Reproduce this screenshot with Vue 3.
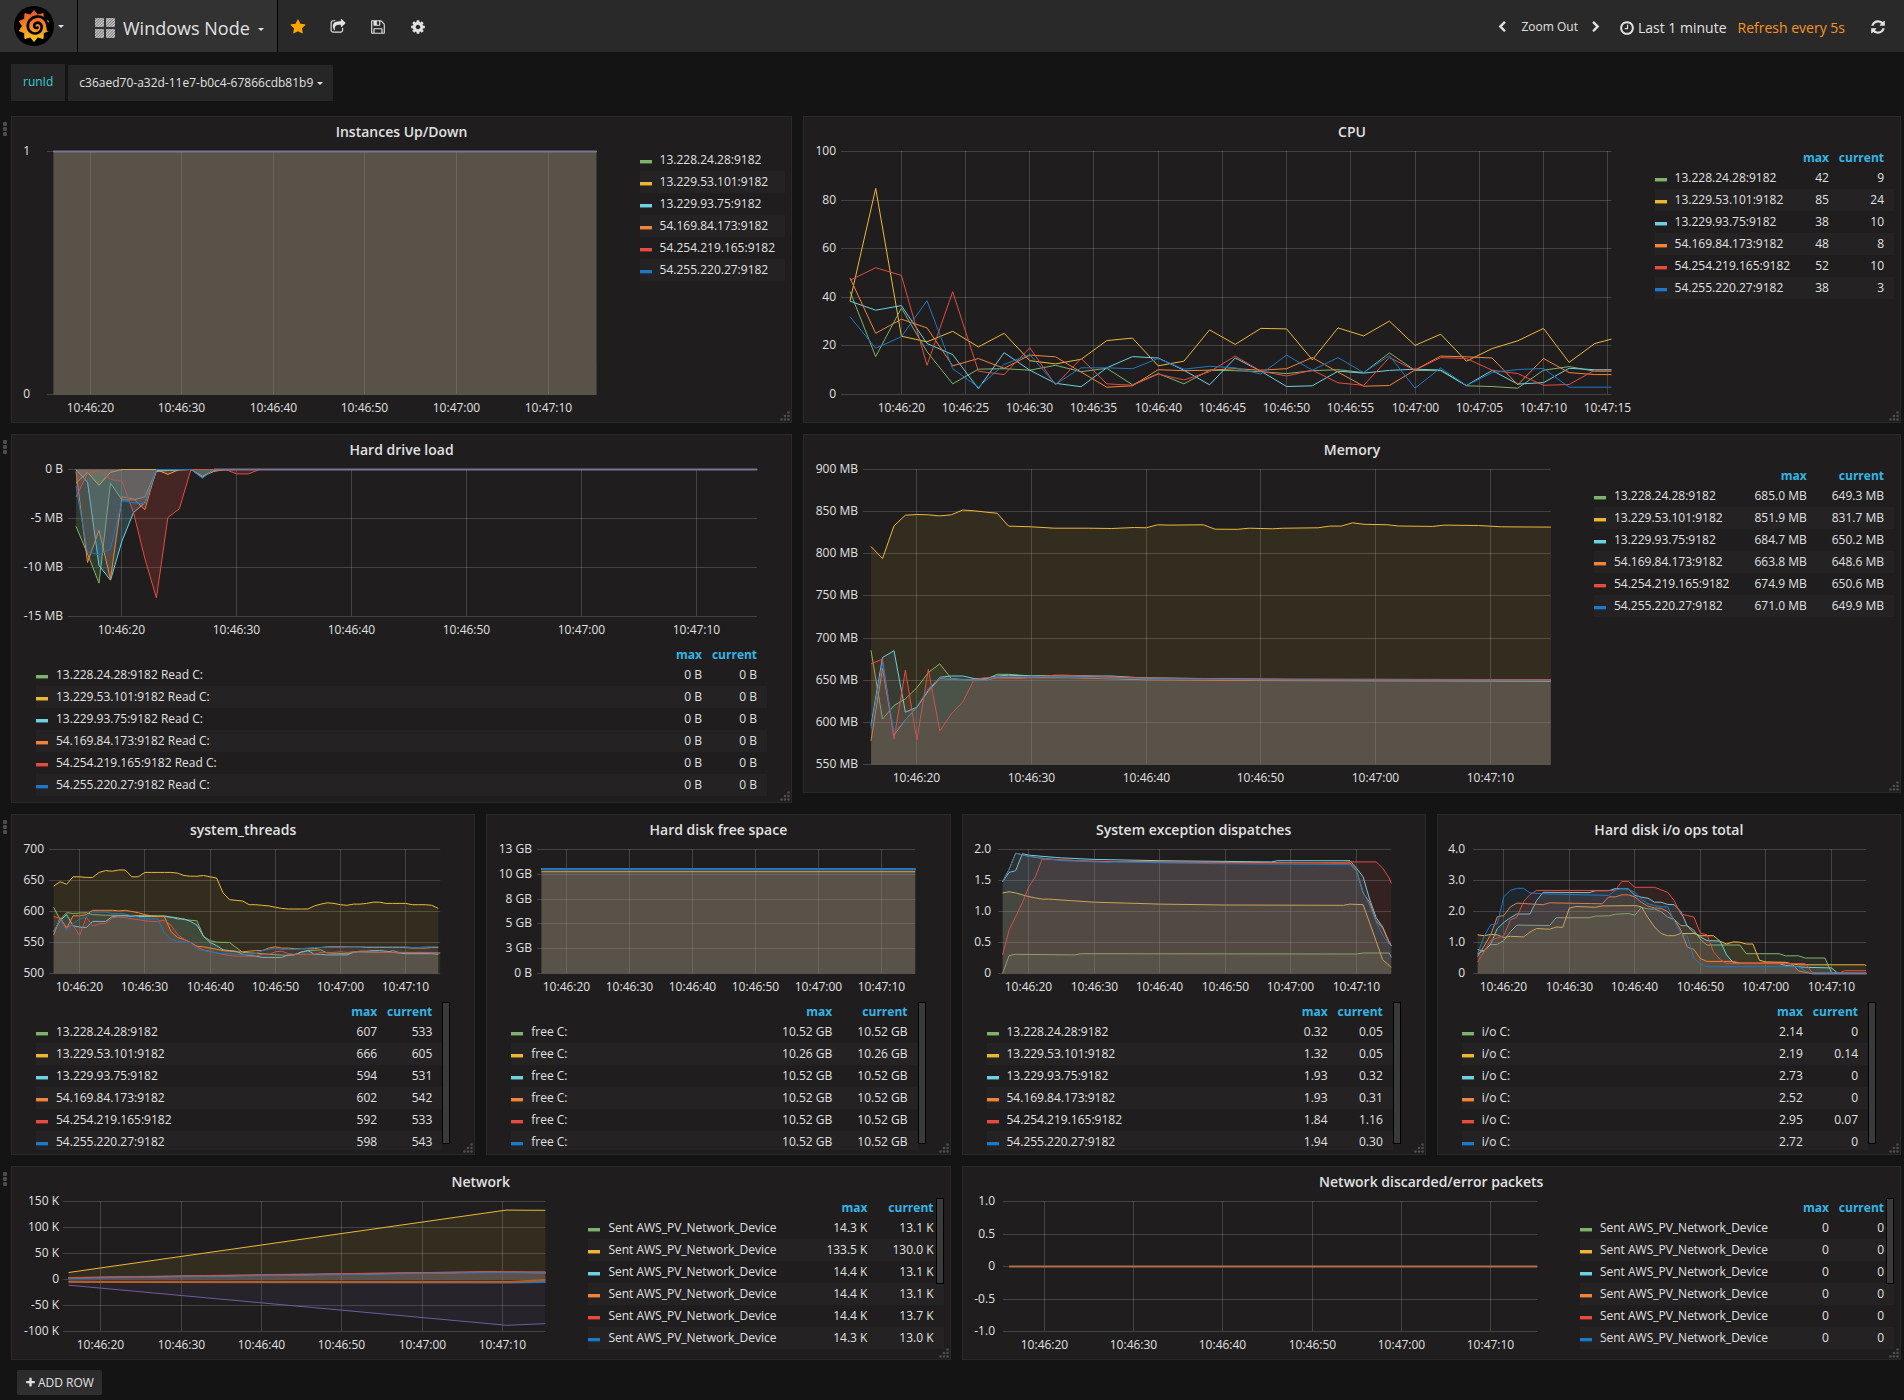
<script setup>
import { ref, reactive, onMounted, onBeforeUnmount } from 'vue'

const GREEN = '#7eb26d'
const YELLOW = '#eab839'
const CYAN = '#6ed0e0'
const ORANGE = '#ef843c'
const RED = '#e24d42'
const BLUE = '#1f78c1'
const PURPLE = '#705da0'
const MAUVE = '#7c7592'
const COLORS = [GREEN, YELLOW, CYAN, ORANGE, RED, BLUE]
const HOSTS = ['13.228.24.28:9182', '13.229.53.101:9182', '13.229.93.75:9182', '54.169.84.173:9182', '54.254.219.165:9182', '54.255.220.27:9182']

// Seconds after 10:46:00. Every chart shows the same one-minute window.
const T0 = 15.3
const T1 = 75.3

// Evenly sampled points, the first at 10:46:16.
const every = (step, values) => values.map((v, i) => [Math.min(16 + i * step, T1), v])
// Points given as t, v, t, v, ...
const at = (...n) => n.reduce((a, v, i) => (i % 2 ? a[a.length - 1].push(v) : a.push([v]), a), [])
const flat = v => [[16, v], [T1, v]]
const line = (color, points, width = 1) => ({ color, points, width })
const rows = (names, ...cols) => names.map((name, i) => ({ name, color: COLORS[i], values: cols.map(c => c[i]) }))
const same = s => COLORS.map(() => s)

const tens = [20, 30, 40, 50, 60, 70]
const fives = [20, 25, 30, 35, 40, 45, 50, 55, 60, 65, 70, 75]

const dashboard = [
  [
    {
      title: 'Instances Up/Down', span: 5, side: true, left: 35, labelRight: 18, h: 243, min: 0, max: 1,
      ticks: [[1, '1'], [0, '0']], times: tens, fill: 0.1,
      series: [...COLORS.map(c => line(c, flat(1))), line(MAUVE, flat(1), 2)],
      legend: rows(HOSTS)
    },
    {
      title: 'CPU', span: 7, side: true, left: 37, labelRight: 32, h: 243, min: 0, max: 100,
      ticks: [100, 80, 60, 40, 20, 0].map(v => [v, String(v)]), times: fives, fill: 0,
      series: [
        line(GREEN, every(2, [42.4, 15.6, 35.6, 17.6, 4.4, 10.4, 10.6, 10, 12, 9.4, 10.8, 4, 8.6, 4.4, 10, 9.8, 9.4, 8.6, 9.8, 10.2, 9, 17.1, 9.9, 9.8, 3.6, 3.3, 2.6, 10, 11.5, 9.6, 9.6])),
        line(YELLOW, every(2, [38.5, 84.8, 24, 21.7, 26, 19.6, 25.2, 13.9, 12.6, 14.5, 22.2, 23.2, 11.8, 13.7, 26.6, 20.6, 27.2, 27, 14.3, 27.4, 24.1, 30.2, 20.2, 24.8, 13.7, 18.9, 22.1, 27.2, 13.2, 21, 22.8])),
        line(CYAN, every(2, [38.4, 34.7, 36.6, 21, 16.4, 2.4, 17.2, 10, 4.6, 3.2, 11, 15.6, 15, 10, 4, 15, 9.6, 3.3, 3.6, 9.6, 8.8, 9.9, 10.4, 10.1, 3.7, 9.9, 4.3, 4.9, 10.8, 10.2, 10.2])),
        line(ORANGE, every(2, [48, 25.2, 31, 27.4, 11.8, 14.8, 10.8, 16.2, 15.5, 9.2, 3, 3.6, 10.2, 9.8, 10, 10.6, 10, 10.6, 15.2, 9.2, 3.4, 3.7, 10.1, 15.8, 15.5, 15, 4, 14.8, 9, 8.2, 8.2])),
        line(RED, every(2, [47, 52.2, 49, 12, 42.3, 9.6, 8.2, 19.2, 4, 14.8, 4.4, 3.8, 8.4, 6, 9.4, 15.8, 9.6, 7.6, 10, 4.8, 3.8, 15.2, 10, 15.2, 14.8, 10, 8.6, 3.8, 4.1, 10, 10])),
        line(BLUE, every(2, [32, 19, 23.8, 38.6, 10.6, 3, 12.4, 16.4, 4.2, 11, 11, 10.6, 14.8, 10.4, 11.6, 11, 8.4, 16.2, 10, 15.2, 9, 16, 2.6, 11, 3.7, 9, 10.3, 10.7, 3, 3, 3]))
      ],
      heads: ['max', 'current'],
      legend: rows(HOSTS, [42, 85, 38, 48, 52, 38], [9, 24, 10, 8, 10, 3])
    }
  ],
  [
    {
      title: 'Hard drive load', span: 5, left: 56, labelRight: 51, h: 147, min: -15, max: 0,
      ticks: [[0, '0 B'], [-5, '-5 MB'], [-10, '-10 MB'], [-15, '-15 MB']], times: tens, fill: 0.2,
      series: [
        line(GREEN, at(16, -5.8, 17, -8.6, 18, -11.6, 19, -1.4, 20, -3.1, 21, -3.1, 22, -2.8, 23, -0.1, 26, 0, 27, -0.7, 28, -0.1, 30, 0, 75.3, 0)),
        line(YELLOW, at(16, -1.4, 17, -0.3, 18, -1.6, 19, -0.3, 20, 0, 23, 0, 24, -0.5, 25, 0, 75.3, 0)),
        line(CYAN, at(16, 0, 17, -1.3, 18, -9.8, 19, -11.3, 20, -7.3, 21, -4.4, 22, -3.4, 23, -0.2, 24, -0.1, 26, 0, 27, -0.8, 28, 0, 75.3, 0)),
        line(ORANGE, at(16, -0.2, 17, -9.5, 18, -6.2, 19, -11.2, 20, -2.8, 21, -3, 22, -4.1, 23, 0, 26, 0, 27, -0.7, 28, -0.2, 29, 0, 75.3, 0)),
        line(RED, at(16, -2.8, 17, -0.4, 18, -0.1, 19, -1, 20, -1.2, 21, -4.4, 22, -9.1, 23, -13.1, 24, -4.9, 25, -4, 26, 0, 29, 0, 30, -0.45, 31, -0.45, 32, 0, 75.3, 0)),
        line(BLUE, at(16, -1.7, 17, -8.4, 18, -8.7, 19, -8.1, 20, -3.2, 21, -3.4, 22, -3.5, 23, 0, 26, 0, 27, -0.9, 28, 0, 75.3, 0)),
        line(MAUVE, at(28, 0, 75.3, 0), 2)
      ],
      heads: ['max', 'current'],
      legend: rows(HOSTS.map(h => h + ' Read C:'), same('0 B'), same('0 B'))
    },
    {
      title: 'Memory', span: 7, side: true, left: 59, labelRight: 54, h: 295, min: 550, max: 900,
      ticks: [900, 850, 800, 750, 700, 650, 600, 550].map(v => [v, v + ' MB']), times: tens, fill: 0.1,
      series: [
        line(GREEN, at(16, 685.5, 17, 604, 18, 620, 19, 628, 20, 641, 21, 659, 22, 669.5, 23, 652, 24, 651, 25, 650.5, 26, 651, 27, 657, 28, 657, 30, 655, 33, 656, 38, 653, 44, 652, 50, 650.5, 60, 650, 75.3, 649.3)),
        line(YELLOW, at(16, 808.6, 17, 794.4, 18, 833.2, 19, 845.8, 20, 846.6, 21, 846.2, 22, 845, 23, 846.2, 24, 852, 25, 851, 26, 849.4, 27, 848.2, 28, 832.8, 30, 832, 32, 830.4, 35, 830.4, 37, 830, 39, 831.2, 40, 830.8, 41, 834.4, 42, 834, 45, 834.4, 46, 829.2, 48, 829, 49, 830.4, 51, 829.6, 52, 830.4, 55, 830.8, 56, 832.8, 57, 832.8, 58, 836.8, 59, 835, 61, 834.5, 62, 833, 65, 832.5, 66, 834, 69, 833.5, 71, 832, 75.3, 831.7)),
        line(CYAN, at(16, 596, 17, 677, 18, 685, 19, 612, 20, 618, 21, 638, 22, 653.5, 23, 655, 24, 655, 25, 652, 26, 652, 27, 655, 28, 656, 30, 655, 37, 655, 40, 652.5, 45, 652, 55, 650.5, 75.3, 650.2)),
        line(ORANGE, at(16, 578, 17, 663.8, 18, 585, 19, 603, 20, 618, 21, 637, 22, 652, 24, 650.5, 26, 650, 27, 653, 33, 653, 40, 650.5, 50, 649.5, 75.3, 648.6)),
        line(RED, at(16, 669.5, 17, 675, 18, 580, 19, 662, 20, 579, 21, 663, 22, 590, 23, 610, 24, 624, 25, 651, 26, 653, 29, 652, 32, 656, 36, 654.5, 40, 652.5, 50, 651.5, 75.3, 650.6)),
        line(BLUE, at(16, 593, 17, 671, 18, 588, 19, 603, 20, 619, 21, 640, 22, 653, 24, 650.5, 26, 650, 27, 654.5, 32, 654, 40, 651.5, 50, 650.5, 75.3, 649.9))
      ],
      heads: ['max', 'current'],
      legend: rows(HOSTS, ['685.0 MB', '851.9 MB', '684.7 MB', '663.8 MB', '674.9 MB', '671.0 MB'], ['649.3 MB', '831.7 MB', '650.2 MB', '648.6 MB', '650.6 MB', '649.9 MB'])
    }
  ],
  [
    {
      title: 'system_threads', span: 3, scroll: true, left: 37, labelRight: 32, h: 124, min: 500, max: 700,
      ticks: [700, 650, 600, 550, 500].map(v => [v, String(v)]), times: tens, fill: 0.1,
      series: [
        line(GREEN, at(16, 607, 17, 587, 18, 598, 19, 597, 21, 598, 22, 595, 24, 594, 33, 593, 34, 591, 35, 590, 36, 587, 38, 585, 39, 560, 40, 553, 41, 550.5, 43, 550, 44, 542, 45, 534, 48, 532, 52, 529, 53, 531, 54, 534, 55, 537, 57, 538, 58, 533, 61, 532, 62, 535, 67, 534, 68, 537, 69, 534, 75.3, 533)),
        line(YELLOW, every(1, [641, 648, 644, 656, 656, 655, 655, 663, 666, 665, 667, 667, 656, 656, 663, 663, 663, 663, 663, 662, 658, 657, 657, 658, 656, 654, 630, 619, 618, 617, 611, 611, 610, 609, 607, 605, 604, 604, 604, 604, 609, 612, 614, 613, 611, 610, 612, 612, 613, 615, 615, 613, 613, 613, 613, 611, 611, 611, 610, 605])),
        line(CYAN, every(1, [568, 585, 595, 577, 575, 574, 584, 584, 584, 592, 593, 593, 592, 592, 592, 592, 592, 592, 591, 588, 588, 584, 578, 560, 550, 545, 538, 537, 536, 531, 529, 528, 526, 526, 526, 526, 530, 530, 535, 537, 531, 531, 530, 530, 530, 530, 534, 536, 536, 537, 537, 536, 534, 533, 532, 532, 532, 532, 532, 531])),
        line(ORANGE, every(1, [562, 590, 573, 593, 593, 595, 602, 602, 602, 602, 601, 602, 600, 598, 595, 593, 592, 592, 568, 558, 555, 550, 544, 543, 541, 539, 537, 536, 535, 535, 536, 537, 537, 541, 543, 541, 541, 540, 540, 540, 540, 542, 543, 543, 543, 543, 543, 543, 542, 542, 542, 542, 542, 542, 542, 541, 541, 541, 542, 542])),
        line(RED, every(1, [592, 589, 575, 578, 561, 591, 577, 580, 581, 590, 591, 590, 588, 587, 585, 584, 584, 586, 578, 563, 555, 550, 543, 538, 536, 533, 531, 529, 528, 528, 528, 528, 531, 531, 535, 536, 532, 531, 531, 531, 531, 534, 534, 534, 535, 534, 535, 535, 535, 535, 534, 534, 534, 534, 534, 534, 534, 534, 533, 533])),
        line(BLUE, every(1, [568, 587, 570, 580, 588, 591, 599, 599, 599, 597, 597, 596, 593, 591, 588, 588, 588, 565, 556, 552, 551, 550, 539, 537, 535, 533, 532, 532, 531, 531, 531, 532, 537, 539, 540, 539, 539, 539, 540, 541, 542, 542, 542, 542, 542, 543, 543, 543, 543, 543, 543, 543, 543, 543, 543, 542, 542, 543, 543, 543]))
      ],
      heads: ['max', 'current'],
      legend: rows(HOSTS, [607, 666, 594, 602, 592, 598], [533, 605, 531, 542, 533, 543])
    },
    {
      title: 'Hard disk free space', span: 3, scroll: true, left: 50, labelRight: 45, h: 124, min: 0, max: 12.5,
      ticks: [[12.5, '13 GB'], [10, '10 GB'], [7.5, '8 GB'], [5, '5 GB'], [2.5, '3 GB'], [0, '0 B']], times: tens, fill: 0.1,
      series: COLORS.map((c, i) => line(c, flat(i === 1 ? 10.26 : 10.52), c === BLUE ? 2 : 1)),
      heads: ['max', 'current'],
      legend: rows(same('free C:'), COLORS.map((c, i) => (i === 1 ? '10.26 GB' : '10.52 GB')), COLORS.map((c, i) => (i === 1 ? '10.26 GB' : '10.52 GB')))
    },
    {
      title: 'System exception dispatches', span: 3, scroll: true, left: 35, labelRight: 28, h: 124, min: 0, max: 2,
      ticks: [[2, '2.0'], [1.5, '1.5'], [1, '1.0'], [0.5, '0.5'], [0, '0']], times: tens, fill: 0.1,
      series: [
        line(GREEN, at(16, 0, 17, 0.29, 18, 0.31, 27, 0.3, 28, 0.32, 70, 0.315, 71, 0.33, 75, 0.33, 75.3, 0.26)),
        line(YELLOW, at(16, 1.3, 17, 1.32, 18, 1.3, 19, 1.27, 20, 1.24, 21, 1.22, 22, 1.2, 23, 1.2, 30, 1.15, 35, 1.135, 40, 1.12, 50, 1.105, 68, 1.1, 69, 1.12, 71, 1.11, 72, 0.82, 73, 0.52, 74, 0.22, 75.3, 0.1)),
        line(CYAN, at(16, 1.48, 17, 1.63, 18, 1.66, 19, 1.93, 20, 1.91, 22, 1.89, 25, 1.865, 30, 1.84, 40, 1.82, 57, 1.8, 58, 1.82, 69, 1.82, 70, 1.7, 71, 1.56, 72, 1.2, 73, 0.9, 74, 0.75, 75, 0.5, 75.3, 0.45)),
        line(ORANGE, at(16, 1.48, 17, 1.68, 18, 1.94, 20, 1.89, 22, 1.86, 25, 1.83, 30, 1.81, 40, 1.8, 69, 1.78, 70, 1.66, 71, 1.3, 72, 1.15, 73, 0.85, 74, 0.73, 75, 0.5, 75.3, 0.45)),
        line(RED, at(16, 0.3, 17, 0.7, 18, 0.92, 19, 1.14, 20, 1.4, 21, 1.56, 22, 1.84, 23, 1.84, 30, 1.81, 40, 1.79, 55, 1.78, 68, 1.79, 69, 1.8, 73, 1.8, 74, 1.7, 75, 1.54, 75.3, 1.45)),
        line(BLUE, at(16, 1.48, 17, 1.68, 18, 1.94, 19, 1.91, 20, 1.89, 22, 1.86, 25, 1.82, 30, 1.8, 32, 1.79, 33, 1.8, 40, 1.785, 50, 1.77, 69, 1.755, 70, 1.65, 71, 1.32, 72, 1.1, 73, 0.83, 74, 0.62, 75, 0.47, 75.3, 0.45))
      ],
      heads: ['max', 'current'],
      legend: rows(HOSTS, ['0.32', '1.32', '1.93', '1.93', '1.84', '1.94'], ['0.05', '0.05', '0.32', '0.31', '1.16', '0.30'])
    },
    {
      title: 'Hard disk i/o ops total', span: 3, scroll: true, left: 35, labelRight: 27, h: 124, min: 0, max: 4,
      ticks: [[4, '4.0'], [3, '3.0'], [2, '2.0'], [1, '1.0'], [0, '0']], times: tens, fill: 0.1,
      series: [
        line(GREEN, at(16, 0.63, 17, 0.75, 18, 0.93, 19, 0.94, 20, 1.06, 21, 1.35, 22, 1.56, 27, 1.55, 28, 1.8, 33, 1.8, 34, 1.85, 36, 1.86, 37, 1.91, 39, 1.94, 40, 1.88, 41, 2.14, 42, 2.08, 43, 2.08, 44, 2, 45, 1.82, 46, 1.75, 47, 1.55, 48, 1.54, 49, 1.4, 50, 1.1, 51, 0.92, 56, 0.92, 57, 0.64, 62, 0.64, 63, 0.57, 65, 0.57, 66, 0.5, 69, 0.5, 70, 0.02, 75.3, 0)),
        line(YELLOW, at(16, 1.25, 17, 1.22, 18, 1.26, 19, 1.25, 20, 1.16, 21, 1.2, 23, 1.18, 24, 1.34, 25, 1.45, 27, 1.43, 28, 1.5, 29, 1.49, 30, 2.11, 31, 2.16, 34, 2.14, 35, 2.18, 40, 2.19, 41, 2.15, 42, 1.8, 43, 1.5, 44, 1.29, 45, 1.22, 46, 1.22, 47, 1.29, 49, 1.29, 50, 1.22, 52, 1.22, 53, 1.04, 54, 0.95, 55, 1.02, 56, 1.01, 57, 0.95, 58, 0.95, 59, 0.43, 60, 0.37, 63, 0.36, 64, 0.31, 65, 0.28, 75, 0.28, 75.3, 0.26)),
        line(CYAN, at(16, 0.77, 17, 0.72, 18, 0.95, 19, 1.45, 20, 1.65, 21, 1.8, 22, 1.92, 24, 1.92, 25, 2.35, 26, 2.62, 33, 2.61, 34, 2.67, 36, 2.67, 37, 2.74, 39, 2.73, 40, 2.52, 41, 2.46, 42, 2.43, 43, 2.3, 44, 2.3, 45, 2.23, 46, 2.22, 47, 2, 48, 1.53, 49, 1.32, 50, 1.18, 51, 1.06, 53, 1.05, 54, 0.6, 55, 0.35, 56, 0.33, 62, 0.32, 63, 0.26, 66, 0.2, 70, 0.18, 71, 0, 75.3, 0)),
        line(ORANGE, at(16, 0.55, 17, 0.88, 18, 1.25, 19, 1.83, 20, 1.87, 21, 2.15, 22, 2.27, 26, 2.22, 27, 2.28, 35, 2.25, 36, 2.47, 37, 2.47, 38, 2.54, 39, 2.54, 40, 2.47, 41, 2.3, 42, 2.17, 43, 2.12, 44, 2.1, 45, 2, 46, 1.75, 47, 1.4, 48, 0.85, 49, 0.78, 50, 0.48, 51, 0.39, 55, 0.39, 56, 0.34, 63, 0.34, 64, 0.3, 65, 0.08, 67, 0, 75.3, 0)),
        line(RED, at(16, 0.37, 17, 0.7, 18, 1.07, 19, 1.15, 20, 1.22, 21, 1.73, 22, 1.82, 23, 2.32, 24, 2.55, 25, 2.68, 37, 2.68, 38, 2.97, 39, 2.97, 40, 2.78, 43, 2.78, 44, 2.7, 45, 2.62, 46, 2.35, 47, 1.92, 48, 1.87, 49, 1.82, 50, 1.3, 51, 1.25, 52, 0.7, 53, 0.45, 54, 0.33, 66, 0.32, 67, 0.04, 68, 0, 71, 0, 72, 0.09, 75.3, 0.09)),
        line(BLUE, at(16, 0.63, 17, 1.2, 18, 1.57, 19, 1.6, 20, 2.48, 21, 2.68, 22, 2.75, 23, 2.75, 24, 2.6, 26, 2.57, 36, 2.52, 37, 2.68, 38, 2.75, 39, 2.72, 40, 2.62, 41, 2.4, 42, 2.25, 43, 2.2, 44, 2.15, 45, 2.15, 46, 1.7, 47, 1.3, 48, 1.2, 49, 0.5, 50, 0.3, 51, 0.22, 65, 0.22, 66, 0.08, 67, 0.02, 75.3, 0.02)),
        line(MAUVE, at(67, 0, 75.3, 0), 2)
      ],
      heads: ['max', 'current'],
      legend: rows(same('i/o C:'), ['2.14', '2.19', '2.73', '2.52', '2.95', '2.72'], ['0', '0.14', '0', '0', '0.07', '0'])
    }
  ],
  [
    {
      title: 'Network', span: 6, side: true, scroll: true, wide: true, left: 51, labelRight: 47, h: 130, min: -100, max: 150,
      ticks: [[150, '150 K'], [100, '100 K'], [50, '50 K'], [0, '0'], [-50, '-50 K'], [-100, '-100 K']], times: tens, fill: 0.1,
      series: [
        line(GREEN, at(16, 3, 68, 14, 75.3, 13)),
        line(YELLOW, at(16, 13.5, 70.4, 133.5, 75.3, 133)),
        line(CYAN, at(16, 3, 68, 14, 75.3, 13)),
        line(ORANGE, at(16, 3, 68, 14, 75.3, 13)),
        line(BLUE, at(16, 3, 68, 14, 75.3, 13.5), 2),
        line(RED, at(16, 3.5, 68, 15, 75.3, 14.5)),
        line(PURPLE, at(16, -11, 70.5, -88, 75.3, -85)),
        line('#ba43a9', at(16, -4, 75.3, -4)),
        line(BLUE, at(16, -4, 20, -5, 71, -6, 75.3, -5), 2),
        line('#c15c17', at(16, -5, 71, -5, 75.3, -1), 2)
      ],
      heads: ['max', 'current'],
      legend: rows(same('Sent AWS_PV_Network_Device'), ['14.3 K', '133.5 K', '14.4 K', '14.4 K', '14.4 K', '14.3 K'], ['13.1 K', '130.0 K', '13.1 K', '13.1 K', '13.7 K', '13.0 K'])
    },
    {
      title: 'Network discarded/error packets', span: 6, side: true, scroll: true, wide: true, left: 40, labelRight: 32, h: 130, min: -1, max: 1,
      ticks: [[1, '1.0'], [0.5, '0.5'], [0, '0'], [-0.5, '-0.5'], [-1, '-1.0']], times: tens, fill: 0,
      series: [line('#b0704a', flat(0), 2)],
      heads: ['max', 'current'],
      legend: rows(same('Sent AWS_PV_Network_Device'), same('0'), same('0'))
    }
  ]
]

const TOP = 10
const widths = reactive({})
const page = ref(null)
let observer

const plotWidth = (p, key) => Math.max((widths[key] || 400) - p.left - (p.side ? 43 : 34), 10)
const px = (p, key, t) => p.left + ((t - T0) / (T1 - T0)) * plotWidth(p, key)
const py = (p, v) => TOP + 0.5 + ((p.max - v) / (p.max - p.min)) * p.h
const crisp = n => Math.round(n - 0.5) + 0.5
const strokePath = (p, key, s) => 'M' + s.points.map(([t, v]) => px(p, key, t).toFixed(1) + ' ' + py(p, v).toFixed(1)).join('L')
const areaPath = (p, key, s) => {
  const base = py(p, Math.min(Math.max(0, p.min), p.max))
  const first = px(p, key, s.points[0][0])
  const last = px(p, key, s.points[s.points.length - 1][0])
  return `${strokePath(p, key, s)}L${last} ${base}L${first} ${base}Z`
}
const clock = t => `10:${t < 60 ? 46 : 47}:${String(t % 60).padStart(2, '0')}`

onMounted(() => {
  const charts = page.value.querySelectorAll('svg.chart')
  const measure = el => { widths[el.dataset.key] = el.getBoundingClientRect().width }
  charts.forEach(measure)
  observer = new ResizeObserver(list => list.forEach(e => measure(e.target)))
  charts.forEach(el => observer.observe(el))
})
onBeforeUnmount(() => observer.disconnect())

const icons = {
  star: 'M1728 647q0 22-26 48l-363 354 86 500q1 7 1 20 0 21-10.5 35.5t-30.5 14.5q-19 0-40-12l-449-236-449 236q-22 12-40 12-21 0-31.5-14.5t-10.5-35.5q0-6 2-20l86-500-364-354q-25-27-25-48 0-37 56-46l502-73 225-455q19-41 49-41t49 41l225 455 502 73q56 9 56 46z',
  share: 'M1472 989v259q0 119-84.5 203.5t-203.5 84.5h-832q-119 0-203.5-84.5t-84.5-203.5v-832q0-119 84.5-203.5t203.5-84.5h255q13 0 22.5 9.5t9.5 22.5q0 27-26 32-77 26-133 60-10 4-16 4h-112q-66 0-113 47t-47 113v832q0 66 47 113t113 47h832q66 0 113-47t47-113v-214q0-19 18-29 28-13 54-37 16-16 35-8 21 9 21 29zm237-496l-384 384q-18 19-45 19-12 0-25-5-39-17-39-59v-192h-160q-323 0-438 131-119 137-74 473 3 23-20 34-8 2-12 2-16 0-26-13-10-14-21-31t-39.5-68.5-49.5-99.5-38.5-114-17.5-122q0-49 3.5-91t14-90 28-88 47-81.5 68.5-74 94.5-61.5 124.5-48.5 159.5-30.5 196.5-11h160v-192q0-42 39-59 13-5 25-5 26 0 45 19l384 384q19 19 19 45t-19 45z',
  save: 'M512 1536h768v-384h-768v384zm896 0h128v-896q0-14-10-38.5t-20-34.5l-281-281q-10-10-34-20t-39-10v416q0 40-28 68t-68 28h-576q-40 0-68-28t-28-68v-416h-128v1280h128v-416q0-40 28-68t68-28h832q40 0 68 28t28 68v416zm-384-928v-320q0-13-9.5-22.5t-22.5-9.5h-192q-13 0-22.5 9.5t-9.5 22.5v320q0 13 9.5 22.5t22.5 9.5h192q13 0 22.5-9.5t9.5-22.5zm640 32v928q0 40-28 68t-68 28h-1344q-40 0-68-28t-28-68v-1344q0-40 28-68t68-28h928q40 0 88 20t76 48l280 280q28 28 48 76t20 88z',
  cog: 'M1152 896q0-106-75-181t-181-75-181 75-75 181 75 181 181 75 181-75 75-181zm512-109v222q0 12-8 23t-20 13l-185 28q-19 54-39 91 35 50 107 138 10 12 10 25t-9 23q-27 37-99 108t-94 71q-12 0-26-9l-138-108q-44 23-91 38-16 136-29 186-7 28-36 28h-222q-14 0-24.5-8.5t-11.5-21.5l-28-184q-49-16-90-37l-141 107q-10 9-25 9-14 0-25-11-126-114-165-168-7-10-7-23 0-12 8-23 15-21 51-66.5t54-70.5q-27-50-41-99l-183-27q-13-2-21-12.5t-8-23.5v-222q0-12 8-23t19-13l186-28q14-46 39-92-40-57-107-138-10-12-10-24 0-10 9-23 26-36 98.5-107.5t94.5-71.5q13 0 26 10l138 107q44-23 91-38 16-136 29-186 7-28 36-28h222q14 0 24.5 8.5t11.5 21.5l28 184q49 16 90 37l142-107q9-9 24-9 13 0 25 10 129 119 165 170 7 8 7 22 0 12-8 23-15 21-51 66.5t-54 70.5q26 50 41 98l183 28q13 2 21 12.5t8 23.5z',
  refresh: 'M1639 1056q0 5-1 7-64 268-268 434.5t-478 166.5q-146 0-282.5-55t-243.5-157l-129 129q-19 19-45 19t-45-19-19-45v-448q0-26 19-45t45-19h448q26 0 45 19t19 45-19 45l-137 137q71 66 161 102t187 36q134 0 250-65t186-179q11-17 53-117 8-23 30-23h192q13 0 22.5 9.5t9.5 22.5zm25-800v448q0 26-19 45t-45 19h-448q-26 0-45-19t-19-45 19-45l138-138q-148-137-349-137-134 0-250 65t-186 179q-11 17-53 117-8 23-30 23h-199q-13 0-22.5-9.5t-9.5-22.5v-7q65-268 270-434.5t480-166.5q146 0 284 55.5t245 156.5l130-129q19-19 45-19t45 19 19 45z',
  clock: 'M1024 544v448q0 14-9 23t-23 9h-320q-14 0-23-9t-9-23v-64q0-14 9-23t23-9h224v-352q0-14 9-23t23-9h64q14 0 23 9t9 23zm416 352q0-148-73-273t-198-198-273-73-273 73-198 198-73 273 73 273 198 198 273 73 273-73 198-198 73-273zm224 0q0 209-103 385.5t-279.5 279.5-385.5 103-385.5-103-279.5-279.5-103-385.5 103-385.5 279.5-279.5 385.5-103 385.5 103 279.5 279.5 103 385.5z',
  left: 'M1427 301l-531 531 531 531q19 19 19 45t-19 45l-166 166q-19 19-45 19t-45-19l-742-742q-19-19-19-45t19-45l742-742q19-19 45-19t45 19l166 166q19 19 19 45t-19 45z',
  right: 'M1363 877l-742 742q-19 19-45 19t-45-19l-166-166q-19-19-19-45t19-45l531-531-531-531q-19-19-19-45t19-45l166-166q19-19 45-19t45 19l742 742q19 19 19 45t-19 45z',
  plus: 'M1600 736v192q0 40-28 68t-68 28h-416v416q0 40-28 68t-68 28h-192q-40 0-68-28t-28-68v-416h-416q-40 0-68-28t-28-68v-192q0-40 28-68t68-28h416v-416q0-40 28-68t68-28h192q40 0 68 28t28 68v416h416q40 0 68 28t28 68z'
}
const actions = [
  { name: 'star', label: 'Mark as favorite' },
  { name: 'share', label: 'Share dashboard' },
  { name: 'save', label: 'Save dashboard' },
  { name: 'cog', label: 'Dashboard settings' }
]

// Rounded rays of the brand flower, alternating between two radii.
const rays = Array.from({ length: 20 }, (_, i) => {
  const a = (i * Math.PI) / 10 - Math.PI / 2
  const r = i % 2 ? 11.5 : 15.5
  return (20 + r * Math.cos(a)).toFixed(1) + ',' + (20 + r * Math.sin(a)).toFixed(1)
}).join(' ')
</script>

<template>
  <div ref="page" class="page">
    <header class="navbar">
      <button class="brand" type="button" aria-label="Main menu">
        <svg class="logo" viewBox="0 0 40 40" aria-hidden="true">
          <defs>
            <linearGradient id="flame" x1="0" y1="0" x2="0" y2="1">
              <stop offset="0" stop-color="#f0512a" />
              <stop offset="0.45" stop-color="#f4802a" />
              <stop offset="1" stop-color="#fccb16" />
            </linearGradient>
          </defs>
          <circle cx="20" cy="20" r="20" fill="#000" />
          <polygon :points="rays" fill="url(#flame)" stroke="url(#flame)" stroke-width="1" stroke-linejoin="round" />
          <path d="M34 24C34 14 28.500 9.800 22.500 10.600C16 11.500 12.800 17 14 22C15.200 26.800 20.500 28.800 24.500 26.600C28 24.600 28.800 19.800 26 17.600C23.500 15.600 20 17.200 20.200 20C20.400 21.800 22.200 22.600 23.600 21.600" fill="none" stroke="#000" stroke-width="2.600" stroke-linecap="round" />
        </svg>
        <i class="caret"></i>
      </button>
      <button class="picker" type="button">
        <svg class="tiles" viewBox="0 0 20 20" aria-hidden="true">
          <defs>
            <pattern id="hatch" width="2" height="2" patternUnits="userSpaceOnUse" patternTransform="rotate(45)">
              <rect width="2" height="2" fill="#7c7c7c" />
              <rect width="1" height="2" fill="#d0d0d0" />
            </pattern>
          </defs>
          <rect v-for="n in 4" :key="n" :x="n % 2 ? 0 : 11" :y="n > 2 ? 11 : 0" width="9" height="9" rx="1" fill="url(#hatch)" />
        </svg>
        <span>Windows Node</span>
        <i class="caret"></i>
      </button>
      <nav class="actions">
        <button v-for="a in actions" :key="a.name" type="button" :class="['action', a.name]" :aria-label="a.label">
          <svg class="icon" viewBox="0 0 1792 1792" aria-hidden="true"><path :d="icons[a.name]" /></svg>
        </button>
      </nav>
      <div class="time">
        <button type="button" class="shift" aria-label="Shift time backward"><svg class="chevron" viewBox="0 0 1792 1792" aria-hidden="true"><path :d="icons.left" /></svg></button>
        <button type="button" class="zoom">Zoom Out</button>
        <button type="button" class="shift" aria-label="Shift time forward"><svg class="chevron" viewBox="0 0 1792 1792" aria-hidden="true"><path :d="icons.right" /></svg></button>
        <button type="button" class="range">
          <svg class="icon" viewBox="0 0 1792 1792" aria-hidden="true"><path :d="icons.clock" /></svg>
          <span>Last 1 minute</span>
          <span class="every">Refresh every 5s</span>
        </button>
        <button type="button" class="reload" aria-label="Refresh"><svg class="icon" viewBox="0 0 1792 1792" aria-hidden="true"><path :d="icons.refresh" /></svg></button>
      </div>
    </header>

    <div class="submenu">
      <label class="var-name" for="run-id">runId</label>
      <button id="run-id" class="var-value" type="button">c36aed70-a32d-11e7-b0c4-67866cdb81b9<i class="caret"></i></button>
    </div>

    <main>
      <section v-for="(row, r) in dashboard" :key="r" class="row">
        <div class="handle"><i></i><i></i><i></i></div>
        <div class="panels">
          <article v-for="(p, c) in row" :key="p.title" :class="['panel', 'span-' + p.span]">
            <h2>{{ p.title }}</h2>
            <div :class="['body', { side: p.side }]">
              <svg class="chart" :data-key="r + '-' + c" :height="TOP + p.h + 26" role="img" :aria-label="p.title">
                <g class="grid">
                  <line v-for="t in p.ticks" :key="t[1]" :x1="p.left" :x2="px(p, r + '-' + c, T1)" :y1="crisp(py(p, t[0]))" :y2="crisp(py(p, t[0]))" />
                  <line v-for="t in p.times" :key="t" :x1="crisp(px(p, r + '-' + c, t))" :x2="crisp(px(p, r + '-' + c, t))" :y1="TOP" :y2="TOP + p.h" />
                </g>
                <g v-for="(s, i) in p.series" :key="i">
                  <path v-if="p.fill && s.color !== MAUVE" :d="areaPath(p, r + '-' + c, s)" :fill="s.color" :fill-opacity="p.fill" />
                  <path :d="strokePath(p, r + '-' + c, s)" fill="none" :stroke="s.color" :stroke-width="s.width" stroke-linejoin="round" />
                </g>
                <text v-for="t in p.ticks" :key="t[1]" :x="p.labelRight" :y="crisp(py(p, t[0])) + 3.5" text-anchor="end">{{ t[1] }}</text>
                <text v-for="t in p.times" :key="t" :x="crisp(px(p, r + '-' + c, t))" :y="TOP + p.h + 18" text-anchor="middle">{{ clock(t) }}</text>
              </svg>
              <div :class="['legend', { scroll: p.scroll, wide: p.wide, plain: !p.heads }]">
                <table>
                  <thead v-if="p.heads">
                    <tr><td></td><th v-for="h in p.heads" :key="h" scope="col">{{ h }}</th></tr>
                  </thead>
                  <tbody>
                    <tr v-for="(l, i) in p.legend" :key="i">
                      <td class="name"><i class="swatch" :style="{ backgroundColor: l.color }"></i>{{ l.name }}</td>
                      <td v-for="(v, j) in l.values" :key="j" class="value">{{ v }}</td>
                    </tr>
                  </tbody>
                </table>
                <i v-if="p.scroll" class="scrollbar"></i>
              </div>
            </div>
            <svg class="grip" viewBox="0 0 10 10" aria-hidden="true">
              <circle cx="8.500" cy="1.500" r="1.300" /><circle cx="5" cy="5" r="1.300" /><circle cx="8.500" cy="5" r="1.300" />
              <circle cx="1.500" cy="8.500" r="1.300" /><circle cx="5" cy="8.500" r="1.300" /><circle cx="8.500" cy="8.500" r="1.300" />
            </svg>
          </article>
        </div>
      </section>
      <button class="add-row" type="button">
        <svg viewBox="0 0 1792 1792" aria-hidden="true"><path :d="icons.plus" /></svg>ADD ROW
      </button>
    </main>
  </div>
</template>

<style>
body {
  margin: 0;
  background: #141414;
}
</style>

<style scoped>
.page {
  min-height: 100vh;
  background: #141414;
  color: #e0e1e2;
  font: 12px/22px "Open Sans", "Noto Sans", sans-serif;
}
button {
  margin: 0;
  padding: 0;
  border: 0;
  background: none;
  color: inherit;
  font: inherit;
  cursor: pointer;
}
.icon {
  width: 16px;
  height: 16px;
  fill: currentColor;
}
.caret {
  display: inline-block;
  border: 3px solid transparent;
  border-top-color: currentColor;
  border-bottom: 0;
}
.navbar {
  display: flex;
  align-items: stretch;
  height: 52px;
  background: #292929;
}
.brand,
.picker {
  display: flex;
  align-items: center;
  background: #323232;
  border-right: 1px solid #000;
}
.brand {
  gap: 4px;
  padding: 0 13px 0 14px;
}
.logo {
  width: 40px;
  height: 40px;
}
.picker {
  gap: 8px;
  padding: 3px 13px 0 17px;
  font-size: 18px;
}
.tiles {
  width: 20px;
  height: 20px;
}
.picker .caret {
  margin-top: 4px;
}
.actions {
  display: flex;
}
.action {
  display: flex;
  align-items: center;
  justify-content: center;
  width: 40px;
  padding-top: 2px;
}
.star {
  color: #ffa500;
}
.time {
  display: flex;
  align-items: center;
  margin-left: auto;
  padding: 2px 18px 0 0;
}
.shift {
  display: flex;
}
.chevron {
  width: 12px;
  height: 12px;
  fill: currentColor;
}
.zoom {
  margin: 0 12px 0 13px;
}
.range {
  display: flex;
  align-items: center;
  gap: 3px;
  margin: 1px 25px 0 17px;
  font-size: 14px;
}
.range .every {
  margin-left: 8px;
  color: #f79520;
}
.reload {
  display: flex;
}
.submenu {
  display: flex;
  align-items: flex-end;
  gap: 3px;
  padding: 12px 11px 15px;
}
.var-name,
.var-value {
  background: #262626;
}
.var-name {
  padding: 7px 12px 8px;
  color: #33d0dc;
}
.var-value {
  display: flex;
  align-items: center;
  gap: 4px;
  height: 36px;
  padding: 0 10px 0 11px;
}
.row {
  display: grid;
  grid-template-columns: 8px 1fr;
  padding: 0 3px 11px 3px;
}
.handle {
  display: flex;
  flex-direction: column;
  gap: 1px;
  padding-top: 6px;
}
.handle i {
  width: 4px;
  height: 4px;
  border-radius: 1px;
  background: #4c4c4c;
}
.panels {
  display: grid;
  grid-template-columns: repeat(12, minmax(0, 1fr));
  align-items: start;
  column-gap: 11px;
}
.panel {
  position: relative;
  border: 1px solid #292929;
  background: #1f1d1d;
}
.span-3 { grid-column: span 3; }
.span-5 { grid-column: span 5; }
.span-6 { grid-column: span 6; }
.span-7 { grid-column: span 7; }
h2 {
  margin: 0;
  padding-top: 5px;
  font-size: 14px;
  font-weight: 600;
  line-height: 19px;
  text-align: center;
}
.body {
  padding-bottom: 6px;
}
.body.side {
  display: flex;
  align-items: flex-start;
  padding: 0 6px 2px 0;
}
.chart {
  display: block;
  width: 100%;
  overflow: visible;
  font-size: 12px;
  fill: #e0e1e2;
}
.side .chart {
  flex: 1;
  width: 0;
  min-width: 0;
}
.grid line {
  stroke: #c8c8c8;
  stroke-opacity: 0.22;
}
.legend {
  position: relative;
  margin: 0 24px;
}
.legend table {
  width: 100%;
  border-spacing: 0;
}
.legend.scroll {
  height: 151px;
  margin-bottom: -2px;
  overflow: hidden;
}
.legend.scroll table {
  width: calc(100% - 8px);
}
.side .legend {
  margin: 4px 0 0;
}
.side .legend.plain {
  margin-top: 8px;
}
.side .legend.scroll {
  height: 154px;
}
.side .legend.scroll table {
  width: 100%;
}
.legend td,
.legend th {
  box-sizing: border-box;
  height: 22px;
  padding: 0;
  line-height: 16px;
  white-space: nowrap;
}
.legend th {
  padding: 3px 10px 0 0;
  color: #33b5e5;
  font-weight: 700;
  text-align: right;
}
.legend td.name {
  padding-right: 10px;
}
.wide td.name {
  min-width: 223px;
}
.legend td.value {
  width: 1px;
  padding: 0 10px 0 15px;
  text-align: right;
}
.legend tbody tr:nth-child(even) {
  background: #242223;
}
.swatch {
  display: inline-block;
  width: 12px;
  height: 3px;
  margin-right: 8px;
  border-bottom: 1px solid rgba(0, 0, 0, 0.45);
}
.scrollbar {
  position: absolute;
  top: 3px;
  right: 0;
  box-sizing: border-box;
  width: 8px;
  height: 142px;
  border: 1px solid #000;
  background: #3a3a3a;
}
.side .scrollbar {
  height: 86px;
}
.grip {
  position: absolute;
  right: 1px;
  bottom: 1px;
  width: 10px;
  height: 10px;
  fill: #4e4e4e;
}
.add-row {
  display: flex;
  align-items: center;
  gap: 2px;
  height: 25px;
  margin: -1px 0 6px 17px;
  padding: 0 8px;
  border-radius: 2px;
  background: linear-gradient(#2a2a2a, #303030);
}
.add-row svg {
  width: 11px;
  height: 11px;
  fill: currentColor;
}
</style>
